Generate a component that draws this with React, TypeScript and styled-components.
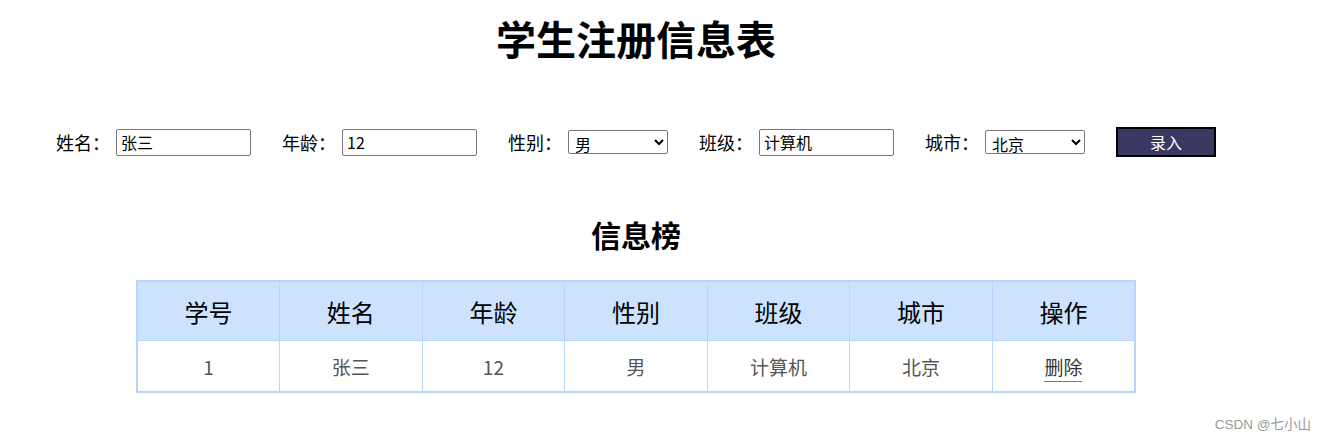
import styled, { createGlobalStyle } from 'styled-components'

const GlobalStyle = createGlobalStyle`
  html, body {
    margin: 0;
    padding: 0;
    background: #fff;
  }
  body {
    font-family: "Microsoft YaHei", "Noto Sans CJK SC", "Noto Sans", sans-serif;
    color: #000;
  }
`

const Page = styled.div`
  position: relative;
  width: 1272px;
  height: 441px;
  padding-top: 14px;
  box-sizing: border-box;
`

const Title = styled.h1`
  margin: 0;
  font-size: 40px;
  line-height: 48px;
  font-weight: 700;
  text-align: center;
`

const Form = styled.div`
  display: flex;
  align-items: center;
  gap: 31px;
  margin-top: 65px;
  padding-left: 56px;
  height: 30px;
`

const Field = styled.label`
  display: flex;
  align-items: center;
  gap: 6px;
  font-size: 18px;
  line-height: 24px;
`

const TextInput = styled.input`
  width: 135px;
  height: 27px;
  box-sizing: border-box;
  border: 1px solid #767676;
  border-radius: 2px;
  padding: 0 4px;
  font-family: inherit;
  font-size: 16px;
  color: #000;
  background: #fff;
  outline: none;
`

const Select = styled.select`
  width: 100px;
  height: 24px;
  box-sizing: border-box;
  border: 1px solid #767676;
  border-radius: 2px;
  padding: 0 2px;
  font-family: inherit;
  font-size: 16px;
  color: #000;
  background: #fff;
`

const SubmitButton = styled.button`
  width: 100px;
  height: 30px;
  box-sizing: border-box;
  border: 2px solid #000;
  background: #3b3861;
  color: #fff;
  font-family: inherit;
  font-size: 16px;
  padding: 0;
`

const SubTitle = styled.h2`
  margin: 59px 0 0;
  font-size: 30px;
  line-height: 36px;
  font-weight: 700;
  text-align: center;
`

const Table = styled.table`
  width: 1000px;
  margin: 28px auto 0;
  border-collapse: collapse;
  table-layout: fixed;
  border: 2px solid #b7d6fb;
`

const HeadCell = styled.th`
  height: 58px;
  border: 1px solid #b7d6fb;
  background: #cde3fd;
  font-size: 24px;
  font-weight: 400;
  color: #000;
  text-align: center;
  padding: 0;
`

const Cell = styled.td`
  height: 50px;
  border: 1px solid #b7d6fb;
  font-size: 19px;
  color: #555;
  text-align: center;
  padding: 0;
`

const DeleteLink = styled.a`
  color: #333;
  text-decoration: none;
  border-bottom: 1px solid #4a7fe0;
  padding-bottom: 1px;
  cursor: pointer;
`

const Watermark = styled.div`
  position: absolute;
  right: -39px;
  bottom: 8px;
  font-size: 13.5px;
  color: #9a9a9a;
  font-family: "Liberation Sans", "Noto Sans CJK SC", sans-serif;
`

const columns = ['学号', '姓名', '年龄', '性别', '班级', '城市', '操作']

const rows = [{ id: 1, name: '张三', age: 12, sex: '男', grade: '计算机', city: '北京' }]

function App() {
  return (
    <>
      <GlobalStyle />
      <Page>
        <Title>学生注册信息表</Title>
        <Form>
          <Field>
            姓名：
            <TextInput defaultValue="张三" />
          </Field>
          <Field>
            年龄：
            <TextInput defaultValue="12" />
          </Field>
          <Field>
            性别：
            <Select defaultValue="男">
              <option>男</option>
              <option>女</option>
            </Select>
          </Field>
          <Field>
            班级：
            <TextInput defaultValue="计算机" />
          </Field>
          <Field>
            城市：
            <Select defaultValue="北京">
              <option>北京</option>
              <option>上海</option>
              <option>广州</option>
            </Select>
          </Field>
          <SubmitButton>录入</SubmitButton>
        </Form>
        <SubTitle>信息榜</SubTitle>
        <Table>
          <thead>
            <tr>
              {columns.map((c) => (
                <HeadCell key={c}>{c}</HeadCell>
              ))}
            </tr>
          </thead>
          <tbody>
            {rows.map((r) => (
              <tr key={r.id}>
                <Cell>{r.id}</Cell>
                <Cell>{r.name}</Cell>
                <Cell>{r.age}</Cell>
                <Cell>{r.sex}</Cell>
                <Cell>{r.grade}</Cell>
                <Cell>{r.city}</Cell>
                <Cell>
                  <DeleteLink>删除</DeleteLink>
                </Cell>
              </tr>
            ))}
          </tbody>
        </Table>
        <Watermark>CSDN @七小山</Watermark>
      </Page>
    </>
  )
}

export default App
